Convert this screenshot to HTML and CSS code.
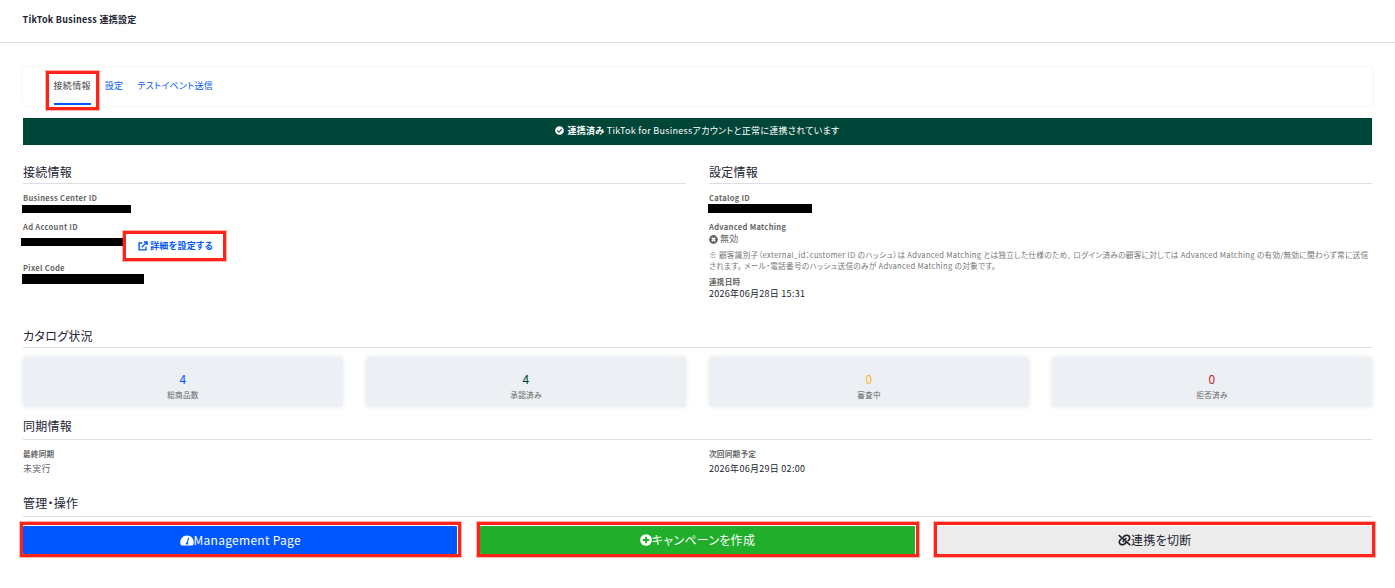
FILE: index.html
```html
<!DOCTYPE html>
<html lang="ja">
  <head>
    <meta charset="UTF-8" />
    <meta name="viewport" content="width=device-width, initial-scale=1.0" />
    <title>TikTok Business 連携設定</title>
    <link rel="stylesheet" href="styles.css">
  </head>

  <body>
    <header class="page-header">
      <h1>TikTok Business 連携設定</h1>
    </header>

    <main class="content">
      <nav class="tabs">
        <a class="tab active marked">接続情報</a>
        <a class="tab">設定</a>
        <a class="tab">テストイベント送信</a>
      </nav>

      <div class="banner">
        <svg class="icon" viewBox="0 0 512 512">
          <path fill="currentColor" fill-rule="evenodd" d="M256 8a248 248 0 1 0 0 496a248 248 0 1 0 0-496zM227 387L403 211c6-6 6-16 0-22l-23-23c-6-6-16-6-22 0L216 308l-62-62c-6-6-16-6-22 0l-23 23c-6 6-6 16 0 22l96 96c6 6 16 6 22 0z" />
        </svg>
        <p><strong>連携済み</strong> TikTok for Businessアカウントと正常に連携されています</p>
      </div>

      <div class="columns info">
        <section>
          <h2>接続情報</h2>
          <div class="label">Business Center ID</div>
          <div class="masked business"></div>
          <div class="label">Ad Account ID</div>
          <div class="account">
            <div class="masked ad"></div>
            <a class="detail marked">
              <svg class="icon" viewBox="0 0 16 16" fill="none" stroke="currentColor" stroke-width="2.2">
                <path d="M7 3.2H1.8v11h11V9M9.5 1.5h5v5M14.2 1.8L6 10" />
              </svg>
              詳細を設定する
            </a>
          </div>
          <div class="label">Pixel Code</div>
          <div class="masked pixel"></div>
        </section>

        <section>
          <h2>設定情報</h2>
          <div class="label">Catalog ID</div>
          <div class="masked catalog"></div>
          <div class="label">Advanced Matching</div>
          <div class="value muted">
            <svg class="icon" viewBox="0 0 16 16">
              <circle cx="8" cy="8" r="7.8" fill="currentColor" />
              <path d="M5 5l6 6M11 5l-6 6" stroke="#fff" stroke-width="2.5" />
            </svg>
            無効
          </div>
          <p class="note">※ 顧客識別子（external_id：customer ID のハッシュ）は Advanced Matching とは独立した仕様のため、 ログイン済みの顧客に対しては Advanced Matching の有効/無効に関わらず常に送信<br>されます。 メール・電話番号のハッシュ送信のみが Advanced Matching の対象です。</p>
          <div class="label">連携日時</div>
          <div class="value">2026年06月28日 15:31</div>
        </section>
      </div>

      <section class="catalog-status">
        <h2>カタログ状況</h2>
        <div class="cards">
          <div class="card"><span class="count blue">4</span><span>総商品数</span></div>
          <div class="card"><span class="count green">4</span><span>承認済み</span></div>
          <div class="card"><span class="count yellow">0</span><span>審査中</span></div>
          <div class="card"><span class="count red">0</span><span>拒否済み</span></div>
        </div>
      </section>

      <section class="sync">
        <h2>同期情報</h2>
        <div class="columns">
          <div>
            <div class="label">最終同期</div>
            <div class="value muted">未実行</div>
          </div>
          <div>
            <div class="label">次回同期予定</div>
            <div class="value">2026年06月29日 02:00</div>
          </div>
        </div>
      </section>

      <section class="operations">
        <h2>管理・操作</h2>
        <div class="buttons">
          <a class="button primary marked">
            <svg class="icon gauge" viewBox="0 0 18 14">
              <path fill="currentColor" d="M9 .5A8.6 8.6 0 0 0 1.6 13.5h14.8A8.6 8.6 0 0 0 9 .5z" />
              <path class="needle" d="M11.3 3.5L9.2 10" />
              <circle class="hub" cx="9" cy="10.8" r="1.5" />
            </svg>Management Page
          </a>
          <a class="button success marked">
            <svg class="icon" viewBox="0 0 16 16">
              <circle cx="8" cy="8" r="7.8" fill="currentColor" />
              <path d="M8 3.7v8.6M3.7 8h8.6" stroke="#20ae2b" stroke-width="2.4" />
            </svg>キャンペーンを作成
          </a>
          <a class="button light marked">
            <svg class="icon unlink" viewBox="0 0 18 16" fill="none" stroke="currentColor" stroke-width="2.3">
              <path d="M1 1.2L17 15M7 4.5C9 1 13.5.6 15.5 3c1.6 2.2.6 4.6-2.2 6.6M11 11.5C9 15 4.5 15.4 2.5 13c-1.6-2.2-.6-4.6 2.2-6.6M11.5 5.5L6.5 10.5" />
            </svg>連携を切断
          </a>
        </div>
      </section>
    </main>
  </body>
</html>
```
FILE: styles.css
```css
* {
  box-sizing: border-box;
}

body {
  min-height: 100vh;
  margin: 0;
  background: #fff;
  color: #212331;
  font-family: "Noto Sans CJK JP", sans-serif;
  font-size: 9px;
  line-height: 12px;
  letter-spacing: 0.28px;
  font-feature-settings: "palt";
}

h1,
h2,
p {
  margin: 0;
}

.page-header {
  height: 43px;
  padding: 13px 22.6px 0;
  border-bottom: 1px solid #dedede;
}

h1 {
  font-size: 9px;
  line-height: 13px;
}

h2 {
  height: 24px;
  border-bottom: 1px solid #dddde6;
  font-size: 12px;
  font-weight: 400;
  line-height: 23px;
}

.content {
  padding: 24px 23px 0;
}

.icon {
  flex: none;
  width: 9px;
  height: 9px;
}

/* red frame around the items to click */
.marked {
  position: relative;
}

.marked::after {
  content: "";
  position: absolute;
  inset: -4px -4px -3px -3px;
  border: 3px solid #ff2419;
  box-shadow: 0 0 0 1px rgba(255, 36, 25, 0.35);
}

.tabs {
  display: flex;
  gap: 14px;
  height: 38px;
  padding-left: 30.6px;
  border-radius: 4px;
  box-shadow: 0 0 5px rgba(0, 50, 40, 0.08);
}

.tab {
  height: 38px;
  color: #0057f5;
  line-height: 37px;
}

.tab.active {
  border-bottom: 2px solid #0057ff;
  color: #444;
}

.tab.marked::after {
  inset: 4px -8px -7px;
}

.banner {
  display: flex;
  justify-content: center;
  align-items: center;
  gap: 3px;
  height: 27px;
  margin-top: 13px;
  padding-bottom: 2px;
  background: #004638;
  color: #fff;
}

.columns {
  display: grid;
  grid-template-columns: repeat(2, minmax(0, 1fr));
  gap: 23px;
}

.info {
  height: 164px;
  padding-top: 15px;
}

.label {
  height: 12px;
  color: #666;
  font-size: 7.6px;
  font-weight: 700;
}

.info h2 + .label {
  margin-top: 8px;
}

.value {
  display: flex;
  align-items: center;
  gap: 2px;
  height: 12px;
}

.muted {
  color: #666;
}

.masked {
  background: #000;
}

.business {
  width: 109px;
  height: 8px;
  margin: 1px 0 8px -1px;
}

.account {
  display: flex;
  align-items: flex-start;
  height: 29px;
}

.ad {
  width: 102px;
  height: 8px;
  margin: 5px 0 0 -2px;
}

.detail {
  display: flex;
  align-items: center;
  gap: 2px;
  height: 24px;
  margin-top: 1px;
  margin-left: 3px;
  padding: 0 10px 0 12px;
  color: #0057f5;
  font-weight: 700;
}

.detail .icon {
  width: 10px;
  height: 10px;
}

.detail.marked::after {
  inset: -3px;
}

.pixel {
  width: 122px;
  height: 10px;
  margin-left: -1px;
}

.catalog {
  width: 104px;
  height: 9px;
  margin: 0 0 8px -1px;
}

.note {
  margin: 4px 0 5px;
  color: #777;
  font-size: 7.65px;
  line-height: 11px;
  white-space: nowrap;
}

.catalog-status {
  padding-top: 15px;
}

.cards {
  display: grid;
  grid-template-columns: repeat(4, 1fr);
  gap: 23px;
  margin-top: 9px;
}

.card {
  display: flex;
  flex-direction: column;
  align-items: center;
  height: 50px;
  padding-top: 15px;
  border-radius: 4px;
  background: #eceff4;
  box-shadow: 0 0 5px rgba(0, 50, 60, 0.1);
  color: #666;
  font-size: 7.6px;
}

.count {
  height: 17px;
  font-size: 12px;
  line-height: 14px;
}

.blue {
  color: #0057ff;
}

.green {
  color: #004638;
}

.yellow {
  color: #ffb52e;
}

.red {
  color: #c81e28;
}

.sync {
  padding-top: 8px;
}

.sync h2,
.operations h2 {
  height: 25px;
  line-height: 22px;
}

.sync .label {
  height: 15px;
  margin-top: 8px;
}

.operations {
  padding-top: 17px;
}

.buttons {
  display: grid;
  grid-template-columns: repeat(3, 1fr);
  gap: 23px;
  margin-top: 9px;
}

.button {
  display: flex;
  justify-content: center;
  align-items: center;
  height: 28px;
  border-radius: 1px;
  color: #fff;
  font-size: 12px;
}

.button .icon {
  width: 12px;
  height: 12px;
}

.button .gauge {
  width: 14px;
  height: 11px;
}

.button .unlink {
  width: 13px;
}

.needle {
  stroke: #0057ff;
  stroke-width: 1.3;
}

.hub {
  fill: #0057ff;
}

.primary {
  background: #0057ff;
}

.success {
  background: #20ae2b;
}

.light {
  background: #ececec;
  color: #212331;
}

.light.marked::after {
  right: -3px;
  left: -4px;
}
```
